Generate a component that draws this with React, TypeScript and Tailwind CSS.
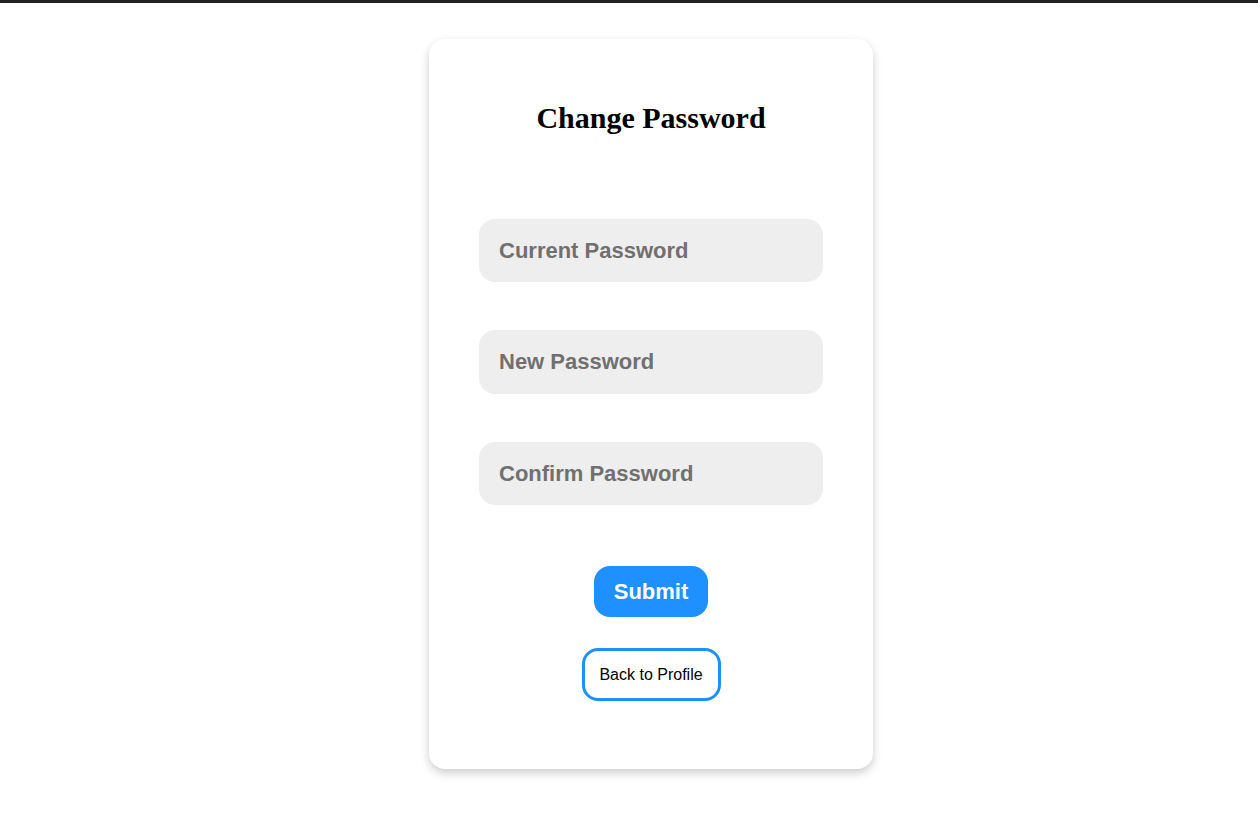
export default function App() {
  return (
    <div className="min-h-screen w-full bg-white font-['Liberation_Sans',Arial,sans-serif]">
      <div className="h-[3px] w-full bg-[#222222]" />
      <main className="flex justify-center pl-[44px] pt-[36px]">
        <section className="flex w-[444px] flex-col items-center rounded-[16px] bg-white px-[50px] pb-[68px] pt-[62px] shadow-[0_4px_10px_rgba(0,0,0,0.2)]">
          <h2 className="h-[34px] font-['Liberation_Serif','Times_New_Roman',serif] text-[30px] font-bold leading-[34px] text-black">
            Change Password
          </h2>
          <form className="mt-[84px] flex w-full flex-col items-center" onSubmit={(e) => e.preventDefault()}>
            <div className="flex w-full flex-col gap-[48px]">
              <input
                type="password"
                placeholder="Current Password"
                className="h-[63px] w-full rounded-[16px] bg-[#eeeeee] px-[20px] text-[22px] font-bold text-[#333] outline-none placeholder:text-[#707070]"
              />
              <input
                type="password"
                placeholder="New Password"
                className="h-[64px] w-full rounded-[16px] bg-[#eeeeee] px-[20px] text-[22px] font-bold text-[#333] outline-none placeholder:text-[#707070]"
              />
              <input
                type="password"
                placeholder="Confirm Password"
                className="h-[63px] w-full rounded-[16px] bg-[#eeeeee] px-[20px] text-[22px] font-bold text-[#333] outline-none placeholder:text-[#707070]"
              />
            </div>
            <button
              type="submit"
              className="mt-[61px] h-[51px] w-[114px] rounded-[16px] bg-[#1e90ff] text-[22px] font-bold text-white"
            >
              Submit
            </button>
            <button
              type="button"
              className="mt-[31px] h-[53px] w-[139px] rounded-[16px] border-[3px] border-[#1e90ff] bg-white text-[16px] text-black"
            >
              Back to Profile
            </button>
          </form>
        </section>
      </main>
    </div>
  );
}
